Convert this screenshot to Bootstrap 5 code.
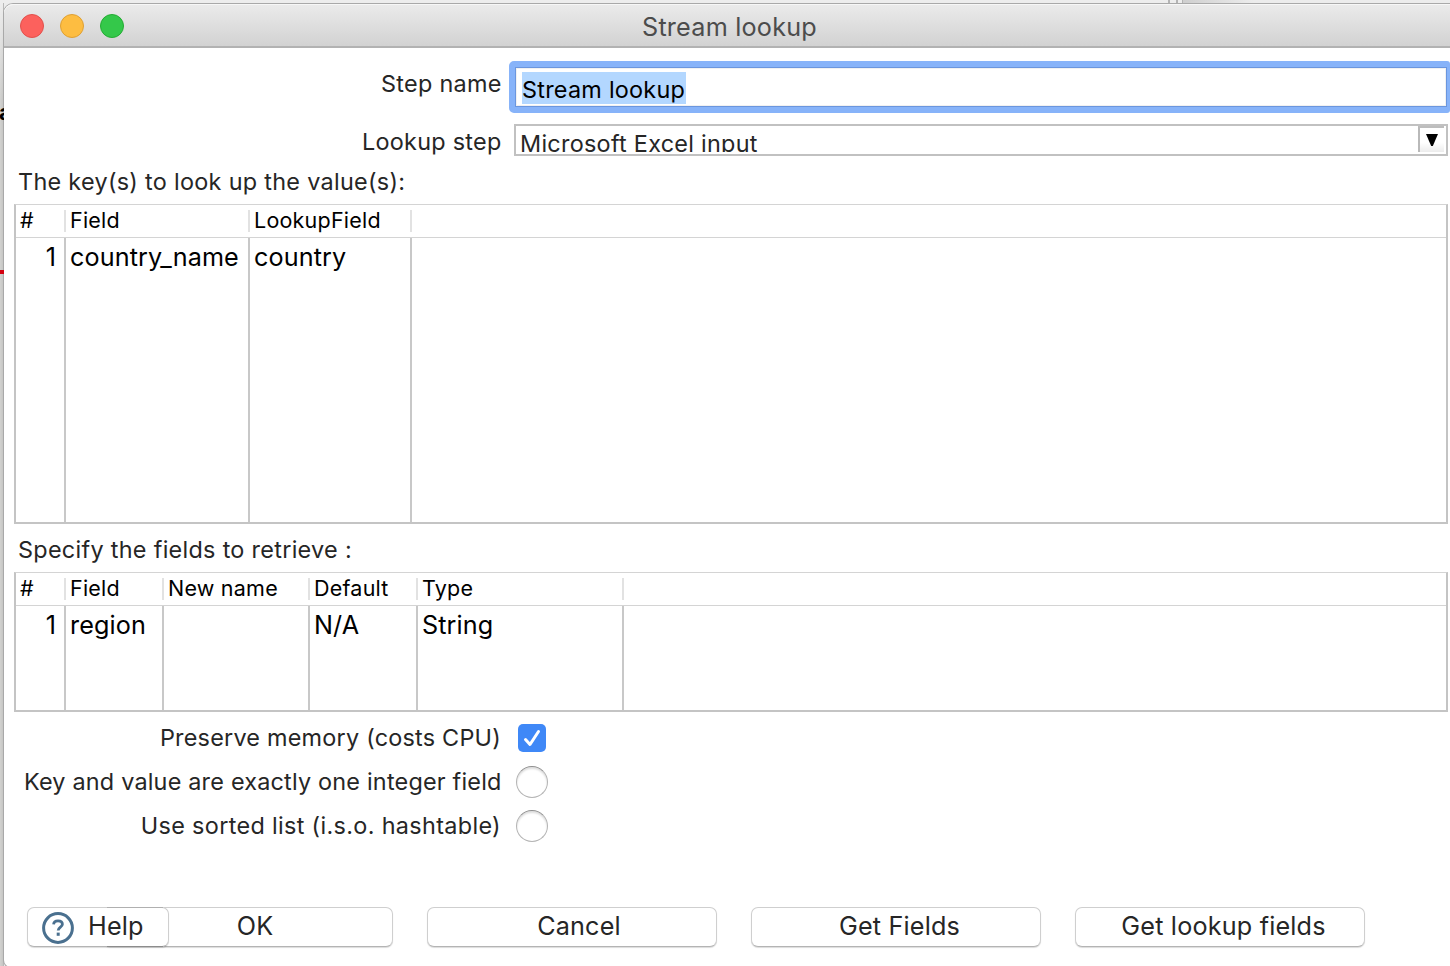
<!DOCTYPE html>
<html lang="en">
<head>
<meta charset="utf-8">
<title>Stream lookup</title>
<link href="https://cdn.jsdelivr.net/npm/bootstrap@5.3.0/dist/css/bootstrap.min.css" rel="stylesheet">
<style>
  body { width: 1450px; height: 966px; overflow: hidden; font-family: Inter, "Liberation Sans", sans-serif; color: #262626;
    background: linear-gradient(90deg, #d2d2d0 0, #c6c6c4 3px, #ababab 4px, #ececec 4px); }
  .desktop { position: relative; height: 966px; padding: 4px 0 0 4px; overflow: hidden; }
  .behind-top { position: absolute; left: 0; top: 0; width: 100%; height: 3px; background: #ededed; }
  .behind-top i { position: absolute; top: 0; height: 3px; background: #b4b4b4; }
  .behind-top .far { left: 1183px; right: 0; background: linear-gradient(90deg, #cfcfcf, #ececec 70px); }
  .behind-left { position: absolute; left: 0; top: 0; width: 3px; height: 100px; background: linear-gradient(#eeeeee, rgba(210,210,208,0)); }
  .behind-text { position: absolute; z-index: 1; left: 0; top: 99px; width: 4px; overflow: hidden; text-indent: -1px; font-size: 22px; line-height: 26px; font-weight: 700; color: #000; }
  .behind-line { position: absolute; z-index: 1; left: 0; top: 270px; width: 4px; height: 4px; background: #d3000f; }
  .window { position: relative; width: 1446px; height: 963px; background: #fff; border-radius: 9px 0 0 7px; box-shadow: 0 0 0 1px #a9a9a9; }
  .titlebar { height: 44px; border-bottom: 2px solid #b2b2b2; border-radius: 9px 0 0 0; background: linear-gradient(#ebebeb, #d2d2d2); box-shadow: inset 0 1px 0 #f7f7f7; font-size: 25.2px; letter-spacing: .22px; color: #4c4c4c; }
  .titlebar .caption { line-height: 44px; padding-top: 1px; padding-left: 5px; }
  .lights { position: absolute; left: 16px; top: 10px; gap: 16px; }
  .light { width: 24px; height: 24px; border-radius: 50%; border: 1px solid; }
  .t23 { font-size: 23.4px; letter-spacing: .28px; }
  .form-lbl { width: 497.6px; margin-right: .4px; text-align: right; flex: none; }
  .step-row { margin-top: 13px; }
  .step-row .form-lbl { line-height: 45px; }
  .focus-field { margin-left: 7px; width: 941px; height: 52px; flex: none; border: 6px solid #87b3f9; border-right-width: 3px; border-radius: 5px 3px 3px 5px; }
  .focus-field > div { height: 40px; border: 1px solid #6b96de; box-shadow: inset 0 0 0 1px #f1f1f1; padding: 4px 0 0 6px; color: #000; }
  .picked { display: inline-block; height: 32px; line-height: 35px; width: 164px; background: #b3d7ff; white-space: nowrap; letter-spacing: .25px; vertical-align: top; }
  .lookup-row { margin-top: 11px; height: 32px; }
  .lookup-row .form-lbl { line-height: 35px; }
  .combo { margin-left: 12px; width: 934px; height: 32px; flex: none; border: 2px solid #c1c1c1; padding-left: 4px; }
  .combo .val { height: 26px; line-height: 35px; overflow: hidden; }
  .combo .drop { width: 26px; height: 26px; margin-right: 2px; border-left: 2px solid #b9b9b9; border-top: 2px solid #bdbdbd; background: linear-gradient(#fff 60%, #ececec); }
  .drop svg { display: block; margin: 6px 0 0 6px; }
  .section { padding: 3px 0 0 14px; line-height: 45px; letter-spacing: .3px; }
  .sheet { margin-left: 10px; width: 1434px; border: 2px solid #c4c4c4; border-top: 1px solid #d4d4d4; color: #000; }
  .sheet-keys { height: 320px; --cols: 50px 184px 162px 1fr; }
  .sheet-vals { height: 140px; --cols: 50px 98px 146px 108px 206px 1fr; }
  .sheet-head, .sheet-body { display: grid; grid-template-columns: var(--cols); }
  .sheet-head { height: 33px; flex: none; border-bottom: 1px solid #d4d4d4; font-size: 21.5px; letter-spacing: .22px; line-height: 31px; }
  .sheet-head > div { padding-left: 4px; background: linear-gradient(#e2e2e2, #e2e2e2) right 5px / 2px 22px no-repeat; }
  .sheet-head > div:last-child { background: none; }
  .sheet-body { font-size: 25.2px; letter-spacing: .1px; line-height: 39px; }
  .sheet-body > div { padding-left: 4px; border-right: 2px solid #c8c8c8; }
  .sheet-body > div:first-child { padding-right: 8px; text-align: right; }
  .sheet-body > div:last-child { border: 0; }
  .opts { margin-top: 4px; }
  .opt { height: 44px; line-height: 43px; }
  .opt .form-lbl { width: 497px; margin-right: 1px; }
  .opt:nth-child(1) { letter-spacing: .23px; }
  .opt:nth-child(2) { letter-spacing: .21px; }
  .opt:nth-child(3) { letter-spacing: .34px; }
  .opt:nth-child(2) .form-lbl { width: 497.6px; margin-right: .4px; }
  .tick { width: 28px; height: 28px; margin: 8px 0 0 16px; border-radius: 5px; background: #3f88f7; }
  .tick svg { display: block; }
  .ring { width: 32px; height: 32px; margin: 6px 0 0 14px; border-radius: 50%; border: 1px solid #b5b5b5; border-top-color: #8f8f8f; box-shadow: inset 0 2px 2px #dedede; }
  .actions { position: relative; margin-top: 59px; padding-left: 99px; gap: 34px; }
  .push { width: 290px; height: 40px; padding: 0 0 2px; border: 1px solid #cfcfcf; border-bottom-color: #b4b4b4; border-radius: 7px; background: #fff; box-shadow: 0 1px 1px rgba(0,0,0,.14); font-size: 25.2px; letter-spacing: .18px; line-height: 36px; color: #262626; }
  .nudge-a { padding-left: 14px; }
  .nudge-b { padding-left: 7px; }
  .push-help { position: absolute; left: 23px; top: 0; width: 142px; padding-left: 14px; text-align: left; }
  .push-help svg { margin-top: 4px; margin-right: 14px; }
  .shade { position: absolute; left: 103px; width: 56px; height: 1px; }
</style>
</head>
<body>
<div class="desktop">
  <div class="behind-left"></div>
  <div class="behind-top"><i style="left:1168px;width:2px"></i><i style="left:1176px;width:2px"></i><i style="left:1182px;width:1px"></i><i class="far"></i></div>
  <div class="behind-text">a</div>
  <div class="behind-line"></div>
  <main class="window">
    <header class="titlebar text-center">
      <div class="lights d-flex">
        <span class="light" style="background:#fc615d;border-color:#e2504c"></span>
        <span class="light" style="background:#fdbd41;border-color:#dfa033"></span>
        <span class="light" style="background:#34c84a;border-color:#24ac33"></span>
      </div>
      <div class="caption">Stream lookup</div>
    </header>

    <div class="step-row d-flex t23">
      <label class="form-lbl">Step name</label>
      <div class="focus-field"><div><span class="picked">Stream lookup</span></div></div>
    </div>
    <div class="lookup-row d-flex t23">
      <label class="form-lbl">Lookup step</label>
      <div class="combo d-flex justify-content-between">
        <div class="val">Microsoft Excel input</div>
        <div class="drop"><svg width="12" height="12"><path d="M0 0H12L6.8 12H5.2Z"/></svg></div>
      </div>
    </div>

    <div class="section t23">The key(s) to look up the value(s):</div>
    <div class="sheet sheet-keys d-flex flex-column">
      <div class="sheet-head"><div>#</div><div>Field</div><div>LookupField</div><div></div></div>
      <div class="sheet-body flex-fill"><div>1</div><div>country_name</div><div>country</div><div></div></div>
    </div>

    <div class="section t23">Specify the fields to retrieve :</div>
    <div class="sheet sheet-vals d-flex flex-column">
      <div class="sheet-head"><div>#</div><div>Field</div><div>New name</div><div>Default</div><div>Type</div><div></div></div>
      <div class="sheet-body flex-fill"><div>1</div><div>region</div><div></div><div>N/A</div><div>String</div><div></div></div>
    </div>

    <div class="opts t23">
      <div class="opt d-flex"><label class="form-lbl">Preserve memory (costs CPU)</label>
        <span class="tick"><svg width="28" height="28" fill="none" stroke="#fff" stroke-width="3" stroke-linecap="round" stroke-linejoin="round"><path d="M7.5 15.5L12 20.5L20.5 7.5"/></svg></span></div>
      <div class="opt d-flex"><label class="form-lbl">Key and value are exactly one integer field</label><span class="ring"></span></div>
      <div class="opt d-flex"><label class="form-lbl">Use sorted list (i.s.o. hashtable)</label><span class="ring"></span></div>
    </div>

    <div class="actions d-flex">
      <button class="push nudge-a">OK</button>
      <button class="push nudge-a">Cancel</button>
      <button class="push nudge-b">Get Fields</button>
      <button class="push nudge-b">Get lookup fields</button>
      <button class="push push-help d-flex"><svg width="32" height="32" fill="none" stroke="#4a708f"><circle cx="16" cy="16" r="14.4" stroke-width="3"/><path d="M11.6 12.4C11.8 9.8 13.6 8.9 16 8.9C18.6 8.9 20.4 10.1 20.4 12.3C20.4 15.2 16.2 15.2 16.2 18.6" stroke-width="2.8"/><path d="M16.2 20.6V23.8" stroke-width="3"/></svg><span>Help</span></button>
      <span class="shade" style="top:0;background:#b0b0b0"></span>
      <span class="shade" style="top:39px;background:#8c8c8c"></span>
    </div>
  </main>
</div>
<script src="https://cdn.jsdelivr.net/npm/bootstrap@5.3.0/dist/js/bootstrap.bundle.min.js"></script>
</body>
</html>
